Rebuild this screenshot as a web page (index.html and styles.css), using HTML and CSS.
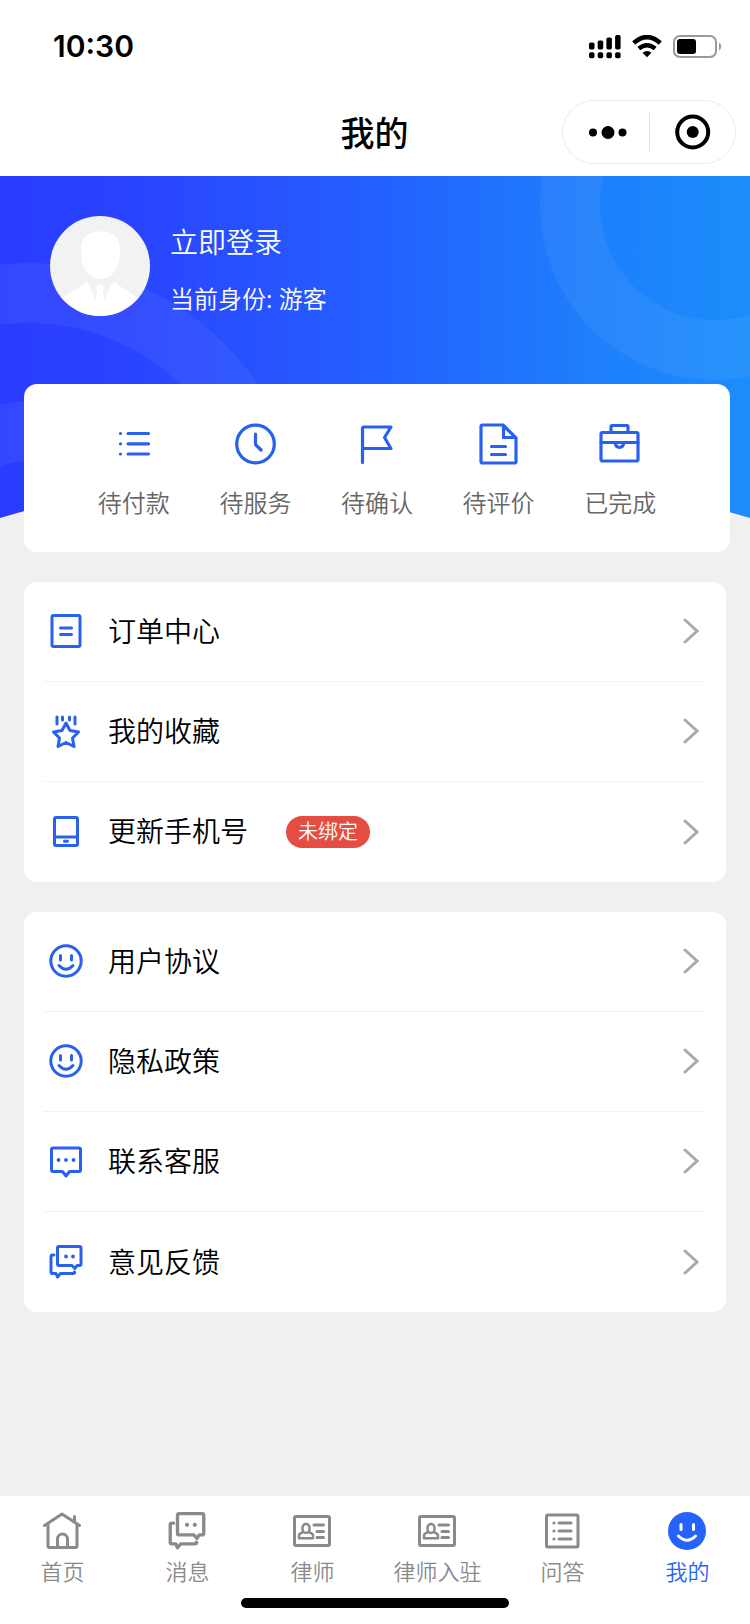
FILE: index.html
```html
<!DOCTYPE html>
<html lang="zh-CN">
<head>
<meta charset="utf-8">
<title>我的</title>
<link rel="stylesheet" href="styles.css">
</head>
<body>
<svg class="defs" aria-hidden="true">
  <symbol id="smile" viewBox="0 0 34 34"><circle cx="17" cy="17" r="15.200"/><path d="M11.500 11.500v4.500M22.500 11.500v4.500M10 21.500q7 7.500 14 0"/></symbol>
  <symbol id="chevron" viewBox="0 0 16 26"><path d="M2 2l12 11L2 24"/></symbol>
  <symbol id="chats" viewBox="0 0 34 34"><path d="M10 1.500h20.500a1.500 1.500 0 0 1 1.500 1.500v16a1.500 1.500 0 0 1-1.500 1.500h-2.500L26 23.500l-3-3H10a1.500 1.500 0 0 1-1.500-1.500V3a1.500 1.500 0 0 1 1.500-1.500zM5 10H3.500A1.500 1.500 0 0 0 2 11.500V27a1.500 1.500 0 0 0 1.500 1.500H7l1.500 3.500 3-3.500H24q2 0 1.500-1.500"/><path class="dots" d="M17 11.500h.01M24 11.500h.01"/></symbol>
  <symbol id="idcard" viewBox="0 0 38 32"><rect x="1.500" y="1.500" width="35" height="29" rx="1.500"/><path d="M21 10h9.500M24 16.500h6.500M24 22.500h6.500"/><rect x="9.500" y="9" width="7" height="9" rx="3.500" stroke-width="2.500"/><path stroke-width="2.500" d="M9.500 17.500Q6 18.500 6 20.500V23.200H20V20.500Q20 18.500 16.500 17.500"/></symbol>
</svg>
<header class="header">
  <div class="status">
    <span class="time">10:30</span>
    <div class="signals">
      <svg class="cell" width="32" height="24" viewBox="0 0 32 24"><rect y="7.500" width="5.500" height="7" rx="1.700"/><rect x="8.700" y="5.500" width="5.500" height="9" rx="1.700"/><rect x="17.400" y="2.500" width="5.500" height="12" rx="1.700"/><rect x="26.100" width="5.500" height="14.500" rx="1.700"/><rect y="17.300" width="5.500" height="6" rx="1.700"/><rect x="8.700" y="17.300" width="5.500" height="6" rx="1.700"/><rect x="17.400" y="17.300" width="5.500" height="6" rx="1.700"/><rect x="26.100" y="17.300" width="5.500" height="6" rx="1.700"/></svg>
      <svg class="wifi" width="30" height="23" viewBox="0 0 30 23"><path d="M1.700 8Q15-3.800 28.300 8M6.800 13.500q8.200-6.600 16.400 0" fill="none" stroke="#000" stroke-width="4.500"/><path d="M10.500 17.700q4.500-3.500 9 0L15 22.200z"/></svg>
      <svg class="battery" width="49" height="24" viewBox="0 0 49 24"><rect x="1" y="1" width="42" height="21" rx="6" fill="none" stroke="#999" stroke-width="2"/><rect x="4" y="4" width="19" height="15" rx="3"/><path d="M46 7.500q4.500 4 0 8z" fill="#999"/></svg>
    </div>
  </div>
  <div class="nav">
    <h1>我的</h1>
    <div class="capsule">
      <svg class="more" width="38" height="14" viewBox="0 0 38 14"><circle cx="4" cy="7.500" r="4"/><circle cx="19" cy="7.500" r="6.500"/><circle cx="33.500" cy="7.500" r="4"/></svg>
      <i></i>
      <svg class="target" width="36" height="36" viewBox="0 0 36 36"><circle cx="17.700" cy="18" r="15.500" fill="none" stroke="#000" stroke-width="4"/><circle cx="17.700" cy="18" r="6"/></svg>
    </div>
  </div>
</header>

<main>
  <section class="hero">
    <svg class="backdrop" width="750" height="342" viewBox="0 0 750 342">
      <defs>
        <linearGradient id="sky"><stop offset="0" stop-color="#2a3cff"/><stop offset=".18" stop-color="#2a44ff"/><stop offset=".5" stop-color="#2460ff"/><stop offset=".8" stop-color="#1e80fb"/><stop offset="1" stop-color="#1c8dfb"/></linearGradient>
        <clipPath id="curve"><path d="M0 0H750V342Q375 232 0 342z"/></clipPath>
      </defs>
      <g clip-path="url(#curve)">
        <rect width="750" height="342" fill="url(#sky)"/>
        <g fill="none" stroke="#fff" stroke-opacity=".055" stroke-width="60"><circle cx="715" cy="29" r="145"/><circle cx="30" cy="361" r="244"/><circle cx="30" cy="361" r="106"/></g>
      </g>
    </svg>
    <div class="profile">
      <svg class="avatar" width="100" height="100" viewBox="0 0 100 100"><defs><clipPath id="face"><circle cx="50" cy="50" r="50"/></clipPath></defs><g clip-path="url(#face)"><rect width="100" height="100" fill="#f2f2f2"/><path d="M31 36C31 20 38 15.500 50.500 15.500S70 20 70 36C70 52 62 63 50.500 63S31 52 31 36zM0 100C8 78 26 77 37 64.500L46 84l1-9-2-3 5-4.500 5 4.500-2 3 1 9 10-19.500C75 77 92 78 100 100z" fill="#fff"/></g></svg>
      <div class="who"><p class="login">立即登录</p><p class="role">当前身份: 游客</p></div>
    </div>
  </section>

  <section class="orders">
    <div class="order"><svg class="ico" viewBox="0 0 42 42"><path d="M15 10.500h20.500M15 20.800h20.500M15 31h20.500"/><path class="small-dots" d="M7.500 10.500h.01M7.500 20.800h.01M7.500 31h.01"/></svg><span>待付款</span></div>
    <div class="order"><svg class="ico" viewBox="0 0 42 42"><circle cx="21.500" cy="21" r="18.800"/><path d="M21.500 11v10.500l5.500 5.500"/></svg><span>待服务</span></div>
    <div class="order"><svg class="ico" viewBox="0 0 42 42"><path d="M6.500 39.500V5.500A1.500 1.500 0 0 1 8 4H35L28.500 14.500l6.500 11H6.500"/></svg><span>待确认</span></div>
    <div class="order"><svg class="ico" viewBox="0 0 42 42"><path d="M4.500 2H25L38 15v23.500a1.500 1.500 0 0 1-1.500 1.500h-32A1.500 1.500 0 0 1 3 38.500v-35A1.500 1.500 0 0 1 4.500 2zM25.500 2v12.500h12M13.500 23.500h14M13.500 31.500h14"/></svg><span>待评价</span></div>
    <div class="order"><svg class="ico" viewBox="0 0 42 42"><rect x="2" y="9.500" width="37" height="28.500" rx="1.500"/><path d="M12 9.500v-6A1 1 0 0 1 13 2.500h15a1 1 0 0 1 1 1v6M2 19.500h37M16 19.500c1 6.500 8 6.500 9 0"/></svg><span>已完成</span></div>
  </section>

  <section class="menu">
    <div class="row"><svg class="ico" viewBox="0 0 34 34"><rect x="3" y="1.500" width="28" height="31" rx="1.500"/><path d="M11.500 14h11M11.500 20.500h11"/></svg><span>订单中心</span><svg class="go"><use href="#chevron"/></svg></div>
    <div class="row"><svg class="ico" viewBox="0 0 34 34"><path d="M17 9l4 7.500 8.500 1.500-6 6 1.500 8.500-8-4-8 4 1.500-8.500-6-6 8.500-1.500zM8 3v7M13.500 3v3M20.500 3v3M26 3v7"/></svg><span>我的收藏</span><svg class="go"><use href="#chevron"/></svg></div>
    <div class="row"><svg class="ico" viewBox="0 0 34 34"><rect x="5.500" y="2.500" width="23" height="28" rx="1.500"/><path d="M5.500 22h23M15.500 26.200h3"/></svg><span class="phone">更新手机号</span><b class="badge">未绑定</b><svg class="go"><use href="#chevron"/></svg></div>
  </section>

  <section class="menu">
    <div class="row"><svg class="ico"><use href="#smile"/></svg><span>用户协议</span><svg class="go"><use href="#chevron"/></svg></div>
    <div class="row"><svg class="ico"><use href="#smile"/></svg><span>隐私政策</span><svg class="go"><use href="#chevron"/></svg></div>
    <div class="row"><svg class="ico" viewBox="0 0 34 34"><path d="M4 4h26A1.500 1.500 0 0 1 31.500 5.500V26a1.500 1.500 0 0 1-1.500 1.500h-9.500L17 32l-3.500-4.500H4A1.500 1.500 0 0 1 2.500 26V5.500A1.500 1.500 0 0 1 4 4z"/><path class="dots" d="M9.500 16h.01M17 16h.01M24.500 16h.01"/></svg><span>联系客服</span><svg class="go"><use href="#chevron"/></svg></div>
    <div class="row"><svg class="ico"><use href="#chats"/></svg><span>意见反馈</span><svg class="go"><use href="#chevron"/></svg></div>
  </section>
</main>

<footer class="tabbar">
  <nav class="tabs">
    <div class="tab"><svg class="ico" viewBox="0 0 38 38"><path d="M1.500 13.500L19 2l17.500 11.500M5 12v22a1.500 1.500 0 0 0 1.500 1.500h26A1.500 1.500 0 0 0 34 34V12M31.500 4.500V9M14.500 35v-8a5 5 0 0 1 10 0v8"/></svg><span>首页</span></div>
    <div class="tab"><svg class="ico"><use href="#chats"/></svg><span>消息</span></div>
    <div class="tab"><svg class="ico"><use href="#idcard"/></svg><span>律师</span></div>
    <div class="tab"><svg class="ico"><use href="#idcard"/></svg><span>律师入驻</span></div>
    <div class="tab"><svg class="ico" viewBox="0 0 38 38"><rect x="3.500" y="3" width="31.500" height="32" rx="1.500"/><path d="M16 11h12M16 19h12M16 27h12"/><path class="small-dots" d="M11 11h.01M11 19h.01M11 27h.01"/></svg><span>问答</span></div>
    <div class="tab active"><svg class="ico" viewBox="0 0 38 38"><circle class="disc" cx="19" cy="19" r="19"/><path class="face" d="M13 12.500v5M25.500 12.500v5M10.500 24q8.500 8.500 17 0"/></svg><span>我的</span></div>
  </nav>
  <div class="home-indicator"></div>
</footer>
</body>
</html>
```

FILE: styles.css
```css
* { box-sizing: border-box; margin: 0; padding: 0; }
body { width: 750px; height: 1624px; display: flex; flex-direction: column; background: #f0f0f0; color: #000; font-family: "Noto Sans CJK SC", sans-serif; font-weight: 350; overflow: hidden; }
svg { display: block; flex: none; }
.defs { display: none; }

.header { flex: none; height: 176px; background: #fff; }
.status { height: 92px; display: flex; justify-content: space-between; align-items: center; padding: 1px 28px 0 53px; }
.time { font: 600 30px/36px Inter, sans-serif; margin-bottom: 2px; }
.signals { display: flex; align-items: center; gap: 11px; }
.nav { height: 84px; display: grid; grid-template-columns: 1fr auto 1fr; align-items: center; padding: 0 14px 4px; }
.nav h1 { grid-column: 2; font-size: 34px; line-height: 50px; font-weight: 500; margin: 0 1px 0 0; }
.capsule { justify-self: end; width: 174px; height: 64px; border: 1px solid #ebebeb; border-radius: 32px; display: flex; align-items: center; padding: 0 24px 0 26px; }
.capsule i { width: 1px; height: 38px; margin: 0 25px 0 22px; background: #e0e0e0; }

main { flex: 1; }
.hero { position: relative; height: 208px; padding: 40px 50px; }
.backdrop { position: absolute; left: 0; top: 0; }
.profile { position: relative; display: flex; gap: 20px; color: #fff; }
.login { font-size: 28px; line-height: 40px; margin-top: 5px; }
.role { font-size: 24px; line-height: 36px; margin-top: 19px; word-spacing: 1px; }

.ico { fill: none; stroke: currentColor; stroke-width: 3; stroke-linecap: round; stroke-linejoin: round; }
.dots { stroke-width: 3.800; }
.small-dots { stroke-width: 3.200; }
.orders { position: relative; width: 706px; height: 168px; margin-left: 24px; padding: 39px 49px 0; border-radius: 13px; background: #fff; display: grid; grid-template-columns: repeat(5, 1fr); }
.order { display: flex; flex-direction: column; align-items: center; color: #2860f0; }
.order .ico { width: 42px; height: 42px; stroke-width: 3.200; }
.order span { margin-top: 19px; font-size: 24px; line-height: 36px; color: #666; }

.menu { width: 702px; margin: 30px 24px 0; padding: 0 20px; border-radius: 13px; background: #fff; }
.row { height: 100px; display: flex; align-items: center; padding: 0 7px 1px 5px; font-size: 28px; line-height: 40px; border-bottom: 1px solid #f2f2f2; }
.row:last-child { border-bottom: 0; }
.row span { margin-bottom: 2px; }
.row .phone { margin-bottom: 4px; }
.row .ico { width: 34px; height: 34px; margin-right: 25px; color: #2860f0; }
.row .go { width: 16px; height: 26px; margin-left: auto; fill: none; stroke: #aaa; stroke-width: 3; stroke-linecap: round; }
.badge { margin-left: 38px; width: 84px; height: 32px; border-radius: 16px; background: #e64d42; color: #fff; font-size: 20px; line-height: 29px; text-align: center; font-weight: 350; }

.tabbar { flex: none; height: 128px; background: #fff; display: flex; flex-direction: column; align-items: center; }
.tabs { width: 750px; height: 102px; display: grid; grid-template-columns: repeat(6, 1fr); }
.tab { display: flex; flex-direction: column; align-items: center; padding-top: 16px; color: #8a8a8a; }
.tab .ico { width: 38px; height: 38px; margin-right: 1px; }
.tab span { margin-top: 4px; font-size: 22px; line-height: 32px; }
.active { color: #2663fc; }
.disc { fill: currentColor; stroke: none; }
.face { stroke: #fff; }
.home-indicator { width: 268px; height: 10px; border-radius: 5px; background: #000; }
```
